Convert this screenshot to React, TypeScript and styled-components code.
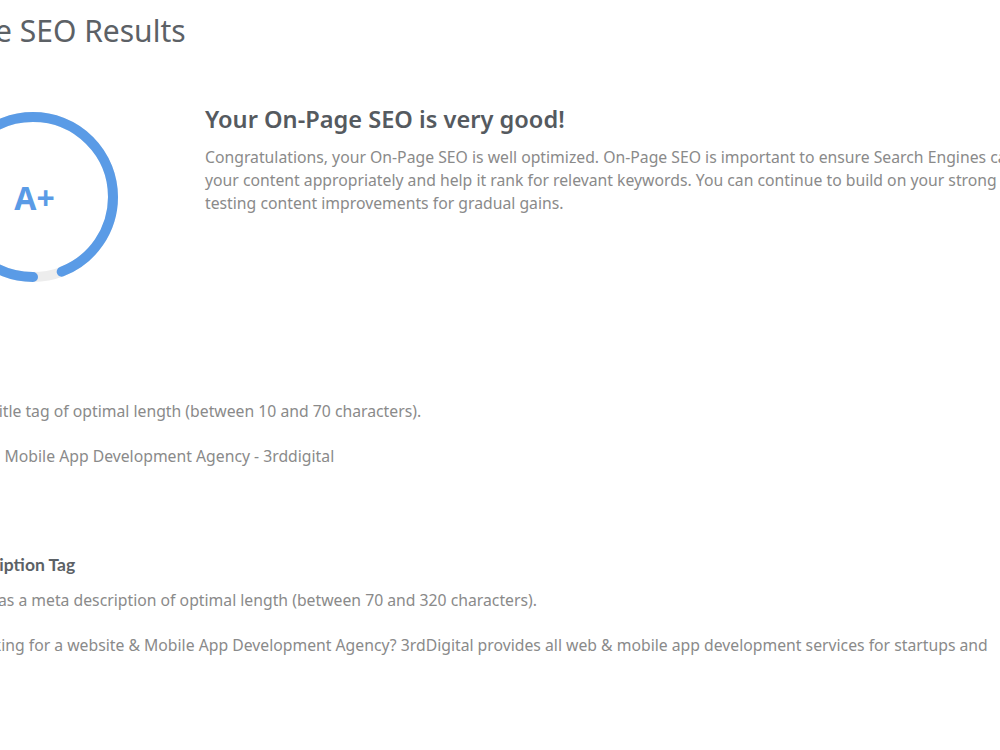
import styled, { createGlobalStyle } from "styled-components";

const GlobalStyle = createGlobalStyle`
  html, body {
    margin: 0;
    padding: 0;
    background: #ffffff;
    overflow: hidden;
  }

  body {
    font-family: "Noto Sans", "Open Sans", sans-serif;
  }
`;

const Report = styled.div`
  width: 1200px;
  margin-left: -110px;
  padding-top: 10px;
`;

const PageTitle = styled.h1`
  margin: 0;
  font-size: 30px;
  font-weight: 400;
  line-height: 42px;
  color: #5c6166;
`;

const Summary = styled.section`
  display: flex;
  align-items: flex-start;
  gap: 87px;
  padding-left: 58px;
  margin-top: 60px;
`;

const Gauge = styled.div`
  position: relative;
  flex: 0 0 170px;
  width: 170px;
  height: 170px;
`;

const Grade = styled.span`
  position: absolute;
  inset: 0;
  display: flex;
  align-items: center;
  justify-content: center;
  padding-left: 3px;
  font-size: 32px;
  font-weight: 700;
  color: #5a9be6;
`;

const SummaryText = styled.div`
  margin-top: -10px;
`;

const SummaryHeading = styled.h2`
  margin: 0 0 10px;
  font-size: 23.6px;
  font-weight: 600;
  line-height: 34px;
  color: #555a5f;
`;

const Paragraph = styled.p`
  margin: 0;
  font-size: 15.75px;
  line-height: 23px;
  color: #8a8a8a;
  white-space: nowrap;
`;

const Checks = styled.div`
  padding-left: 19px;
  margin-top: 82px;
  display: flex;
  flex-direction: column;
  gap: 86px;
`;

const Check = styled.section`
  display: flex;
  flex-direction: column;
`;

const CheckTitle = styled.h3`
  margin: 0;
  font-family: Lato, "Noto Sans", sans-serif;
  font-size: 17.5px;
  font-weight: 700;
  line-height: 24px;
  color: #5c6166;
`;

const CheckNote = styled.p`
  margin: 12px 0 0;
  font-size: 15.75px;
  line-height: 22px;
  color: #8a8a8a;
`;

const CheckValue = styled.p`
  margin: 23px 0 0;
  max-width: 1150px;
  font-size: 15.75px;
  line-height: 22px;
  color: #8a8a8a;
`;

type GaugeRingProps = {
  percent: number;
};

const GaugeRing = ({ percent }: GaugeRingProps) => {
  const r = 80;
  const c = 2 * Math.PI * r;
  return (
    <svg width="170" height="170" viewBox="0 0 170 170">
      <circle cx="85" cy="85" r={r} fill="none" stroke="#ededed" strokeWidth="10" />
      <circle
        cx="85"
        cy="85"
        r={r}
        fill="none"
        stroke="#5a9be6"
        strokeWidth="10"
        strokeLinecap="round"
        strokeDasharray={`${(percent / 100) * c} ${c}`}
        transform="rotate(90 85 85)"
      />
    </svg>
  );
};

const checks = [
  {
    title: "Title Tag",
    note: "You have a title tag of optimal length (between 10 and 70 characters).",
    value: "Website and Mobile App Development Agency - 3rddigital",
  },
  {
    title: "Meta Description Tag",
    note: "Your page has a meta description of optimal length (between 70 and 320 characters).",
    value:
      "Are you looking for a website & Mobile App Development Agency? 3rdDigital provides all web & mobile app development services for startups and businesses.",
  },
];

const App = () => {
  return (
    <>
      <GlobalStyle />
      <Report>
        <PageTitle>On-Page SEO Results</PageTitle>

        <Summary>
          <Gauge>
            <GaugeRing percent={94} />
            <Grade>A+</Grade>
          </Gauge>
          <SummaryText>
            <SummaryHeading>Your On-Page SEO is very good!</SummaryHeading>
            <Paragraph>
              Congratulations, your On-Page SEO is well optimized. On-Page SEO is important to ensure Search Engines can understand
              <br />
              your content appropriately and help it rank for relevant keywords. You can continue to build on your strong position by
              <br />
              testing content improvements for gradual gains.
            </Paragraph>
          </SummaryText>
        </Summary>

        <Checks>
          {checks.map((check) => (
            <Check key={check.title}>
              <CheckTitle>{check.title}</CheckTitle>
              <CheckNote>{check.note}</CheckNote>
              <CheckValue>{check.value}</CheckValue>
            </Check>
          ))}
        </Checks>
      </Report>
    </>
  );
};

export default App;
